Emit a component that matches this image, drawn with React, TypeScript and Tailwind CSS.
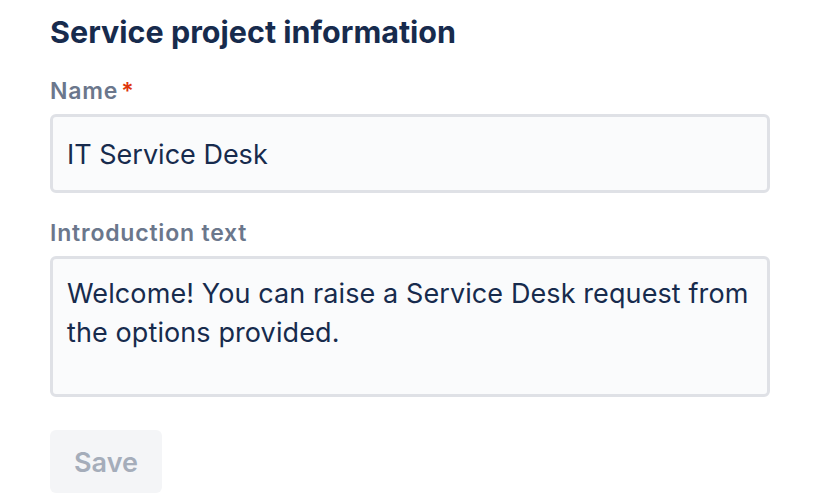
export default function App() {
  return (
    <div
      className="min-h-[504px] w-[828px] bg-white px-[50px] pt-[14px]"
      style={{ fontFamily: "Inter, 'Noto Sans', sans-serif" }}
    >
      <h2 className="text-[30.5px] font-bold leading-[36px] text-[#172B4D]">
        Service project information
      </h2>

      <label className="mt-[27px] block text-[23px] font-semibold leading-[28px] tracking-[0.8px] text-[#6B778C]">
        Name<span className="ml-[3px] text-[#DE350B]">*</span>
      </label>
      <div className="mt-[9px] h-[79px] w-[720px] rounded-[6px] border-[3px] border-[#DFE1E6] bg-[#FAFBFC] px-[14px] pt-[20px] text-[27px] leading-[36px] text-[#172B4D]">
        IT Service Desk
      </div>

      <label className="mt-[26px] block text-[23px] font-semibold leading-[28px] tracking-[0.8px] text-[#6B778C]">
        Introduction text
      </label>
      <div className="mt-[9px] h-[141px] w-[720px] rounded-[6px] border-[3px] border-[#DFE1E6] bg-[#FAFBFC] px-[14px] pt-[15px] text-[27px] leading-[39px] tracking-[0.1px] whitespace-nowrap text-[#172B4D]">
        Welcome! You can raise a Service Desk request from
        <br />
        the options provided.
      </div>

      <button
        disabled
        className="mt-[33px] flex h-[63px] w-[112px] items-center justify-center rounded-[6px] bg-[#F4F5F7] pt-[4px] text-[27px] font-semibold text-[#A5ADBA]"
      >
        Save
      </button>
    </div>
  );
}
